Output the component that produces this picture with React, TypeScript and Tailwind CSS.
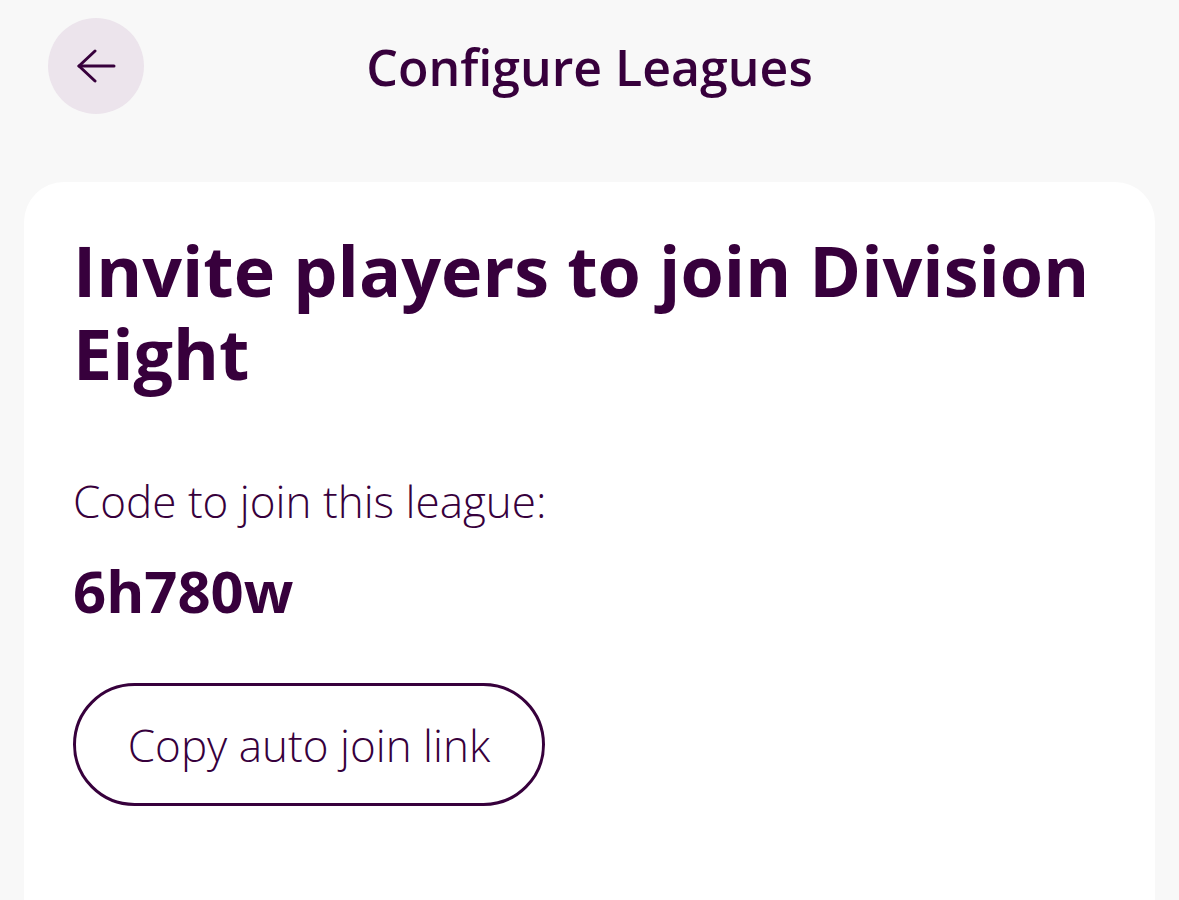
import React from "react";

export default function App() {
  return (
    <div
      className="w-[1179px] h-[900px] overflow-hidden bg-[#f8f8f8] text-[#37003c]"
      style={{ fontFamily: "'Open Sans', 'Noto Sans', sans-serif" }}
    >
      <header className="relative h-[182px]">
        <div className="flex items-center justify-center pt-[18px] h-[115px]">
          <h1 className="text-[50px] font-semibold leading-none">Configure Leagues</h1>
        </div>
        <button className="absolute left-[48px] top-[18px] w-[96px] h-[96px] rounded-full bg-[#ece4ec] flex items-center justify-center">
          <svg width="40" height="34" viewBox="0 0 40 34" fill="none" stroke="#37003c" strokeWidth="3" strokeLinecap="round" strokeLinejoin="round">
            <path d="M38 17H3" />
            <path d="M19 2L3 17l16 15" />
          </svg>
        </button>
      </header>
      <main className="mx-[24px] h-[800px] rounded-[40px] bg-white px-[49px] pt-[47px]">
        <h2 className="text-[70px] font-bold leading-[83px]">Invite players to join Division Eight</h2>
        <p className="mt-[80px] text-[44px] font-light leading-[52px]">Code to join this league:</p>
        <p className="mt-[31px] text-[58px] font-bold leading-[66px]">6h780w</p>
        <button className="mt-[59px] h-[123px] w-[472px] rounded-full border-[3px] border-[#37003c] text-[44px] font-light">
          Copy auto join link
        </button>
      </main>
    </div>
  );
}
